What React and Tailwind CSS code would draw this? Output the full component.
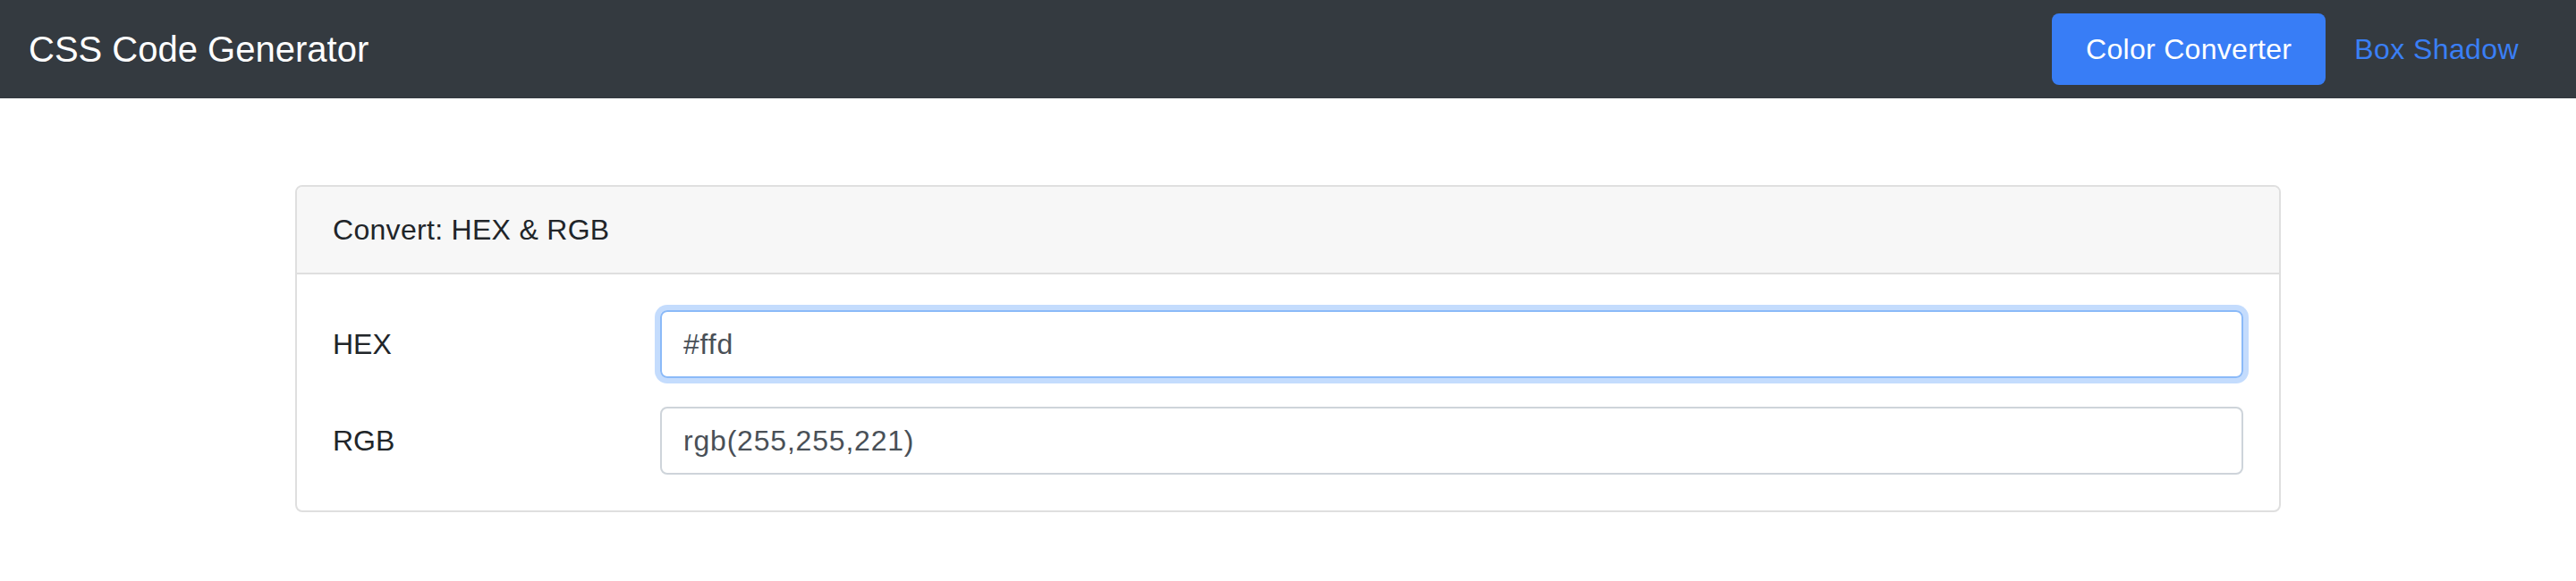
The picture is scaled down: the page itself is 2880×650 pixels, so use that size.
export default function App() {
  return (
    <div className="min-h-[650px] bg-white text-[#212529] font-['Liberation_Sans',Arial,sans-serif]">
      <nav className="h-[110px] bg-[#343a40] flex items-center justify-between px-[32px]">
        <a href="#" className="text-white text-[40px] leading-[60px]">CSS Code Generator</a>
        <div className="flex items-center">
          <a href="#" className="bg-[#387df6] text-white text-[32px] leading-[48px] py-[16px] px-[38px] rounded-[8px] tracking-[0.3px]">
            Color Converter
          </a>
          <a href="#" className="text-[#3a7ff5] text-[32px] leading-[48px] py-[16px] px-[32px] tracking-[0.4px]">
            Box Shadow
          </a>
        </div>
      </nav>

      <div className="w-[2220px] mx-auto mt-[97px] border-2 border-[#dfdfdf] rounded-[8px] overflow-hidden">
        <div className="bg-[#f7f7f7] border-b-2 border-[#dfdfdf] px-[40px] py-[24px] text-[32px] leading-[48px] tracking-[0.3px]">
          Convert: HEX &amp; RGB
        </div>
        <div className="p-[40px] flex flex-col gap-[32px]">
          <div className="flex items-center">
            <label className="w-[366px] shrink-0 text-[32px] leading-[48px]">HEX</label>
            <input
              defaultValue="#ffd"
              className="flex-1 h-[76px] border-2 border-[#8bbaf8] rounded-[8px] px-[24px] text-[32px] tracking-[0.8px] text-[#495057] outline-none shadow-[0_0_0_6px_#c4dcfd] font-['Liberation_Sans',Arial,sans-serif]"
            />
          </div>
          <div className="flex items-center">
            <label className="w-[366px] shrink-0 text-[32px] leading-[48px]">RGB</label>
            <input
              defaultValue="rgb(255,255,221)"
              className="flex-1 h-[76px] border-2 border-[#ced4da] rounded-[8px] px-[24px] text-[32px] tracking-[0.8px] text-[#495057] outline-none font-['Liberation_Sans',Arial,sans-serif]"
            />
          </div>
        </div>
      </div>
    </div>
  );
}
